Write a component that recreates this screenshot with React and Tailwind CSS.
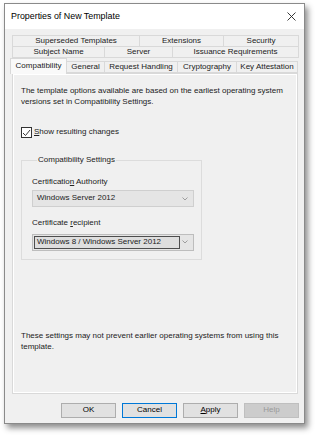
import React from 'react'

const font = "font-['Liberation_Sans',Arial,sans-serif]"

function Tab({ w, children, active }) {
  if (active) {
    return (
      <div
        className={`relative z-10 -mb-px flex h-[16px] items-start justify-center border border-b-0 border-[#d9d9d9] bg-[#f9f9f9] pt-[2px] ${w}`}
      >
        {children}
      </div>
    )
  }
  return (
    <div className={`-ml-px flex h-[12px] items-center justify-center border border-[#d9d9d9] bg-[#f0f0f0] ${w}`}>
      {children}
    </div>
  )
}

function Chevron() {
  return (
    <svg width="6" height="4" viewBox="0 0 6 4" className="text-[#8a8a8a]">
      <path d="M0.5 0.5 L3 3 L5.5 0.5" fill="none" stroke="currentColor" strokeWidth="0.8" />
    </svg>
  )
}

function Button({ children, primary, disabled }) {
  return (
    <div
      className={`flex h-[15px] w-[55px] items-center justify-center border ${
        primary
          ? 'border-[#0078d7] bg-[#e1e1e1] text-black'
          : disabled
          ? 'border-[#bfbfbf] bg-[#cccccc] text-[#9a9a9a]'
          : 'border-[#adadad] bg-[#e1e1e1] text-black'
      }`}
    >
      {children}
    </div>
  )
}

export default function App() {
  return (
    <div className={`h-[437px] w-[317px] bg-white pl-[4px] pt-[3px] ${font} text-[8px] leading-[10.5px] text-[#222]`}>
      <div className="flex h-[421px] w-[301px] flex-col border border-[#8a8a8a] bg-[#f0f0f0] shadow-[3px_4px_6px_rgba(0,0,0,0.45)]">
        {/* title bar */}
        <div className="flex h-[25px] items-center justify-between bg-white pl-[6px] pr-[8px]">
          <span className="text-[8.9px] text-black">Properties of New Template</span>
          <svg width="9" height="9" viewBox="0 0 9 9">
            <path d="M0.5 0.5 L8.5 8.5 M8.5 0.5 L0.5 8.5" stroke="#222" strokeWidth="0.9" />
          </svg>
        </div>

        {/* tabs */}
        <div className="pt-[6px]">
          <div className="flex pl-[8px]">
            <Tab w="w-[128px]">Superseded Templates</Tab>
            <Tab w="w-[85px]">Extensions</Tab>
            <Tab w="w-[76px]">Security</Tab>
          </div>
          <div className="-mt-px flex pl-[8px]">
            <Tab w="w-[93px]">Subject Name</Tab>
            <Tab w="w-[69px]">Server</Tab>
            <Tab w="w-[127px]">Issuance Requirements</Tab>
          </div>
          <div className="-mt-px flex h-[16px] items-end pl-[5px]">
            <Tab active w="w-[57px]">Compatibility</Tab>
            <Tab w="w-[39px]">General</Tab>
            <Tab w="w-[74px]">Request Handling</Tab>
            <Tab w="w-[60px]">Cryptography</Tab>
            <Tab w="w-[62px]">Key Attestation</Tab>
          </div>
        </div>

        {/* panel */}
        <div className="ml-[7px] flex h-[321px] w-[286px] flex-col border border-[#d9d9d9] bg-[#f0f0f0] pl-[8px] shadow-[inset_0_0_0_1px_#ffffff]">
          <p className="mt-[12px] w-[264px]">
            The template options available are based on the earliest operating system versions set in Compatibility
            Settings.
          </p>

          <div className="mt-[20px] flex items-center gap-[2px]">
            <div className="flex h-[11px] w-[11px] items-center justify-center border border-[#333] bg-white">
              <svg width="9" height="8" viewBox="0 0 9 8">
                <path d="M1 4 L3.5 6.5 L8 1" fill="none" stroke="#222" strokeWidth="0.9" />
              </svg>
            </div>
            <span>
              <u>S</u>how resulting changes
            </span>
          </div>

          <fieldset className="mt-[17px] w-[181px] border border-[#dcdcdc] pb-[8px] pl-[10px]">
            <legend className="ml-[5px] px-[1px]">Compatibility Settings</legend>
            <div className="mt-[11px]">
              Certificatio<u>n</u> Authority
            </div>
            <div className="mt-[3px] flex h-[17px] w-[162px] items-center justify-between border border-[#cfcfcf] bg-[#e5e5e5] pl-[4px] pr-[5px]">
              <span>Windows Server 2012</span>
              <Chevron />
            </div>
            <div className="mt-[11px]">
              Certificate <u>r</u>ecipient
            </div>
            <div className="mt-[5px] flex h-[17px] w-[162px] items-center justify-between border border-[#bdbdbd] bg-[#e5e5e5] p-px pr-[5px]">
              <div className="flex h-full w-[146px] items-center border border-[#4d4d4d] bg-[#dedede] pl-[2px]">
                Windows 8 / Windows Server 2012
              </div>
              <Chevron />
            </div>
          </fieldset>

          <p className="mb-[41px] mt-auto w-[264px]">
            These settings may not prevent earlier operating systems from using this template.
          </p>
        </div>

        {/* buttons */}
        <div className="mt-[9px] flex justify-end gap-[6px] pr-[5px]">
          <Button>OK</Button>
          <Button primary>Cancel</Button>
          <Button>
            <span>
              <u>A</u>pply
            </span>
          </Button>
          <Button disabled>Help</Button>
        </div>
      </div>
    </div>
  )
}
